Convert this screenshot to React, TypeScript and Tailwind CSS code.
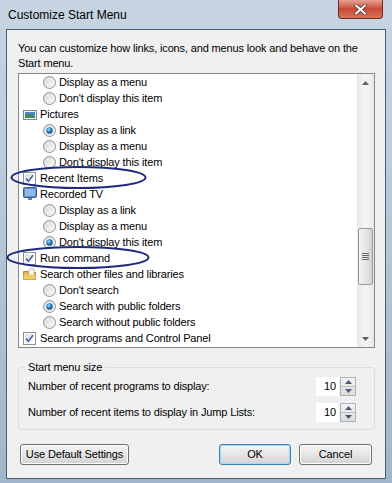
import React from 'react';

type Row =
  | { kind: 'radio'; label: string; checked?: boolean }
  | { kind: 'check'; label: string }
  | { kind: 'cat'; label: string; icon: 'pictures' | 'tv' | 'folder' };

const ROWS: Row[] = [
  { kind: 'radio', label: 'Display as a menu' },
  { kind: 'radio', label: "Don't display this item" },
  { kind: 'cat', label: 'Pictures', icon: 'pictures' },
  { kind: 'radio', label: 'Display as a link', checked: true },
  { kind: 'radio', label: 'Display as a menu' },
  { kind: 'radio', label: "Don't display this item" },
  { kind: 'check', label: 'Recent Items' },
  { kind: 'cat', label: 'Recorded TV', icon: 'tv' },
  { kind: 'radio', label: 'Display as a link' },
  { kind: 'radio', label: 'Display as a menu' },
  { kind: 'radio', label: "Don't display this item", checked: true },
  { kind: 'check', label: 'Run command' },
  { kind: 'cat', label: 'Search other files and libraries', icon: 'folder' },
  { kind: 'radio', label: "Don't search" },
  { kind: 'radio', label: 'Search with public folders', checked: true },
  { kind: 'radio', label: 'Search without public folders' },
  { kind: 'check', label: 'Search programs and Control Panel' },
];

function Radio({ checked }: { checked?: boolean }) {
  return (
    <svg width="13" height="13" viewBox="0 0 13 13" className="shrink-0">
      <defs>
        <linearGradient id="rg" x1="0" y1="0" x2="1" y2="1">
          <stop offset="0" stopColor="#d6d6d6" />
          <stop offset="1" stopColor="#ffffff" />
        </linearGradient>
        <radialGradient id="rdot" cx="0.4" cy="0.35" r="0.7">
          <stop offset="0" stopColor="#a8e0fb" />
          <stop offset="0.5" stopColor="#2a7fc4" />
          <stop offset="1" stopColor="#0f3f7e" />
        </radialGradient>
      </defs>
      <circle cx="6.5" cy="6.5" r="6" fill="url(#rg)" stroke="#8e8f8f" strokeWidth="1" />
      <circle cx="6.5" cy="6.5" r="4.2" fill="none" stroke="#e8e8e8" strokeWidth="1" />
      {checked && <circle cx="6.5" cy="6.5" r="3.2" fill="url(#rdot)" />}
    </svg>
  );
}

function Check() {
  return (
    <svg width="13" height="13" viewBox="0 0 13 13" className="shrink-0">
      <defs>
        <linearGradient id="cg" x1="0" y1="0" x2="1" y2="1">
          <stop offset="0" stopColor="#dcdcdc" />
          <stop offset="1" stopColor="#ffffff" />
        </linearGradient>
      </defs>
      <rect x="0.5" y="0.5" width="12" height="12" fill="#fff" stroke="#8e8f8f" />
      <rect x="2" y="2" width="9" height="9" fill="url(#cg)" />
      <path d="M3 6.5 L5.3 9.2 L10 3.2" fill="none" stroke="#4a5fa8" strokeWidth="1.6" />
    </svg>
  );
}

function CatIcon({ icon }: { icon: 'pictures' | 'tv' | 'folder' }) {
  if (icon === 'pictures')
    return (
      <svg width="14" height="13" viewBox="0 0 14 13" className="shrink-0">
        <rect x="0.5" y="2.5" width="13" height="9" fill="#f4f4f4" stroke="#7c8a96" />
        <rect x="2" y="4" width="10" height="3" fill="#4a86c8" />
        <path d="M2 10 L2 7 L6 6 L12 7.5 L12 10 Z" fill="#3d8a5a" />
      </svg>
    );
  if (icon === 'tv')
    return (
      <svg width="14" height="14" viewBox="0 0 14 14" className="shrink-0">
        <rect x="0.5" y="0.5" width="13" height="10" rx="1" fill="#5b8fc9" stroke="#3a5e8c" />
        <rect x="2" y="2" width="10" height="7" fill="#8fbbe6" />
        <rect x="5" y="11" width="4" height="2" fill="#6f7f90" />
      </svg>
    );
  return (
    <svg width="14" height="13" viewBox="0 0 14 13" className="shrink-0">
      <path d="M0.5 3.5 L5 3.5 L6 4.5 L12.5 4.5 L12.5 11.5 L0.5 11.5 Z" fill="#e2b650" stroke="#b9892a" />
      <rect x="6" y="1" width="5" height="8" fill="#fafafa" stroke="#a0a0a0" strokeWidth="0.6" />
      <path d="M0.5 6.5 L12.5 6.5 L12.5 11.5 L0.5 11.5 Z" fill="#f0cc6c" />
    </svg>
  );
}

function Spin() {
  return (
    <div className="flex h-[19px] items-stretch">
      <div className="w-[23px] bg-white pr-[3px] text-right leading-[19px]">10</div>
      <div className="ml-px flex w-[16px] flex-col border border-[#a8b3bd] bg-gradient-to-b from-[#f3f3f3] to-[#dcdcdc]">
        <div className="flex flex-1 items-center justify-center border-b border-[#b8c0c8]">
          <svg width="7" height="4" viewBox="0 0 7 4"><path d="M0 4 L3.5 0 L7 4 Z" fill="#4a5a78" /></svg>
        </div>
        <div className="flex flex-1 items-center justify-center">
          <svg width="7" height="4" viewBox="0 0 7 4"><path d="M0 0 L3.5 4 L7 0 Z" fill="#4a5a78" /></svg>
        </div>
      </div>
    </div>
  );
}

function Btn({ children, def, w }: { children: React.ReactNode; def?: boolean; w: string }) {
  return (
    <div
      className={`${w} flex h-[21px] items-center justify-center rounded-[3px] border bg-gradient-to-b from-[#f4f4f4] via-[#e6e6e6] to-[#d2d2d2] ${
        def ? 'border-[#3c7fb1] shadow-[inset_0_0_0_1px_#a6d8f4]' : 'border-[#707070] shadow-[inset_0_0_0_1px_#fcfcfc]'
      }`}
    >
      {children}
    </div>
  );
}

export default function App() {
  return (
    <div className="relative h-[483px] w-[392px] overflow-hidden bg-gradient-to-b from-[#c7d5e2] via-[#b4c6d7] to-[#9fb6cc] font-['Liberation_Sans',Arial,sans-serif] text-[11px] text-black">
      {/* title bar */}
      <div className="flex h-[29px] items-center pl-[8px] text-[12px] text-black">Customize Start Menu</div>
      <div className="absolute right-[9px] top-0 flex h-[19px] w-[45px] items-center justify-center rounded-b-[4px] border border-t-0 border-[#6d2a22] bg-gradient-to-b from-[#e8a192] via-[#c74a35] to-[#d9735c]">
        <svg width="13" height="11" viewBox="0 0 13 11">
          <path d="M2 1.5 L11 9.5 M11 1.5 L2 9.5" stroke="#4a2a26" strokeWidth="3.6" strokeLinecap="round" />
          <path d="M2 1.5 L11 9.5 M11 1.5 L2 9.5" stroke="#ffffff" strokeWidth="2.2" strokeLinecap="round" />
        </svg>
      </div>

      {/* client area */}
      <div className="ml-[6px] h-[450px] w-[380px] border border-[#4f5c69] bg-[#f0f0f0] px-[11px] pt-[11px] tracking-[-0.15px]">
        <div className="leading-[15px]">
          You can customize how links, icons, and menus look and behave on the
          <br />
          Start menu.
        </div>

        {/* list box */}
        <div className="mt-[2px] flex h-[275px] w-[357px] border border-[#828790] bg-white">
          <div className="flex-1 overflow-hidden">
            {ROWS.map((r, i) => (
              <div key={i} className="flex h-[16px] items-center whitespace-nowrap">
                {r.kind === 'radio' && (
                  <div className="flex items-center gap-[3px] pl-[24px]">
                    <Radio checked={r.checked} />
                    <span>{r.label}</span>
                  </div>
                )}
                {r.kind === 'check' && (
                  <div className="flex items-center gap-[4px] pl-[4px]">
                    <Check />
                    <span>{r.label}</span>
                  </div>
                )}
                {r.kind === 'cat' && (
                  <div className="flex items-center gap-[3px] pl-[4px]">
                    <CatIcon icon={r.icon} />
                    <span>{r.label}</span>
                  </div>
                )}
              </div>
            ))}
          </div>
          {/* scrollbar */}
          <div className="flex w-[17px] flex-col bg-gradient-to-r from-[#e8e8e8] via-[#f6f6f6] to-[#e8e8e8]">
            <div className="flex h-[17px] items-center justify-center">
              <svg width="7" height="4" viewBox="0 0 7 4"><path d="M0 4 L3.5 0 L7 4 Z" fill="#606060" /></svg>
            </div>
            <div className="flex-1 pt-[137px]">
              <div className="mx-px flex h-[57px] items-center justify-center rounded-[2px] border border-[#9a9a9a] bg-gradient-to-r from-[#f2f2f2] via-[#e6e6e6] to-[#d2d2d2]">
                <svg width="7" height="7" viewBox="0 0 7 7">
                  <path d="M0 0.5 H7 M0 2.5 H7 M0 4.5 H7 M0 6.5 H7" stroke="#6a6a6a" strokeWidth="1" />
                </svg>
              </div>
            </div>
            <div className="flex h-[17px] items-center justify-center">
              <svg width="7" height="4" viewBox="0 0 7 4"><path d="M0 0 L3.5 4 L7 0 Z" fill="#606060" /></svg>
            </div>
          </div>
        </div>

        {/* group box */}
        <div className="relative mt-[19px] h-[63px] w-[357px] rounded-[3px] border border-[#d5dfe5] px-[9px] pt-[9px]">
          <div className="absolute left-[6px] top-[-8px] bg-[#f0f0f0] px-[3px] leading-[14px]">Start menu size</div>
          <div className="flex h-[19px] items-center justify-between pr-[9px]">
            <span>Number of recent programs to display:</span>
            <Spin />
          </div>
          <div className="mt-[7px] flex h-[19px] items-center justify-between pr-[9px]">
            <span>Number of recent items to display in Jump Lists:</span>
            <Spin />
          </div>
        </div>

        {/* buttons */}
        <div className="mt-[14px] flex items-center">
          <Btn w="w-[109px] ml-[2px]">Use Default Settings</Btn>
          <div className="flex-1" />
          <Btn w="w-[72px]" def>OK</Btn>
          <Btn w="w-[73px] ml-[8px] mr-[2px]">Cancel</Btn>
        </div>
      </div>

      {/* hand-drawn highlight ellipses */}
      <svg className="pointer-events-none absolute left-0 top-0" width="392" height="483">
        <ellipse cx="78.5" cy="177.5" rx="67" ry="10.5" fill="none" stroke="#1d2b7e" strokeWidth="2" />
        <ellipse cx="78" cy="257.5" rx="70.5" ry="10.5" fill="none" stroke="#1d2b7e" strokeWidth="2" />
      </svg>
    </div>
  );
}
